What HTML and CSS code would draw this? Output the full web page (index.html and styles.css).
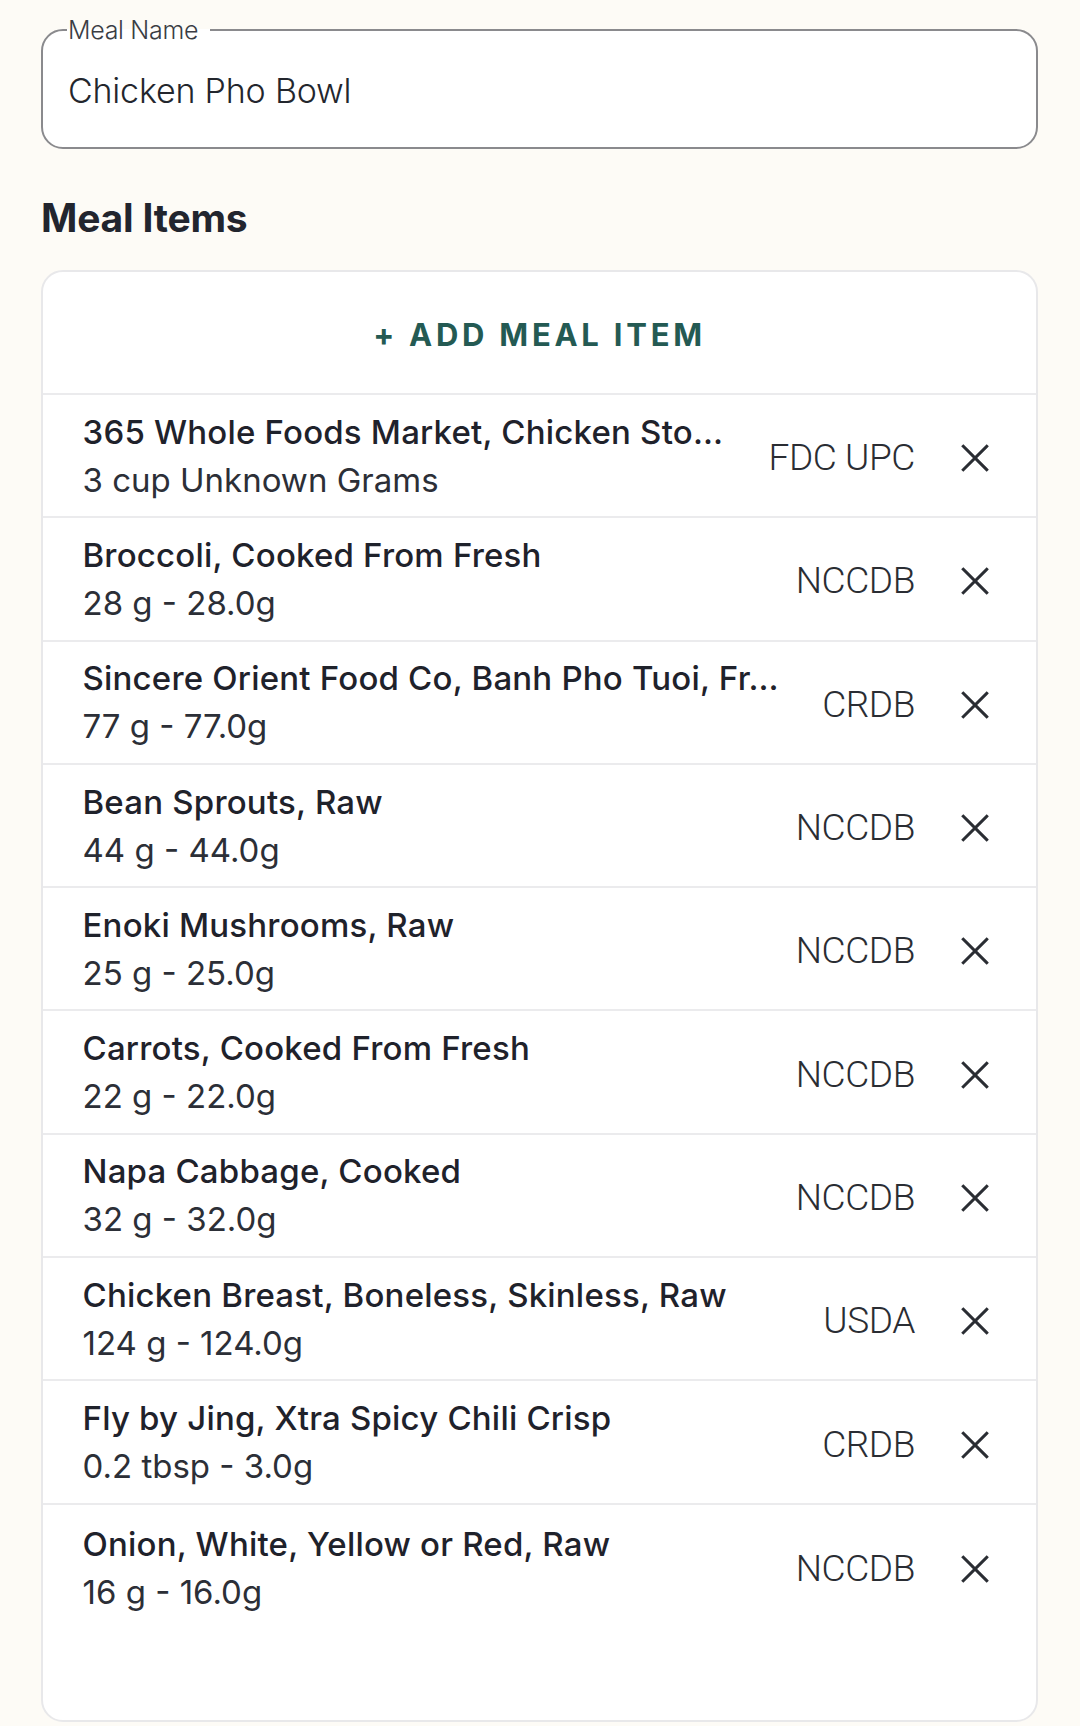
FILE: index.html
```html
<!DOCTYPE html>
<html>
<head>
<meta charset="utf-8">
<link rel="stylesheet" href="styles.css">
</head>
<body>
<div class="page">
  <fieldset class="field">
    <legend class="field-label">Meal Name</legend>
    <div class="field-value">Chicken Pho Bowl</div>
  </fieldset>

  <h2 class="section-title">Meal Items</h2>

  <div class="card">
    <div class="add-btn">+ ADD MEAL ITEM</div>
    <div class="row">
      <div class="info"><div class="name">365 Whole Foods Market, Chicken Sto…</div><div class="amount">3 cup Unknown Grams</div></div>
      <div class="source">FDC UPC</div>
      <svg class="close" viewBox="0 0 24 24"><path d="M2 2L22 22M22 2L2 22"/></svg>
    </div>
    <div class="row">
      <div class="info"><div class="name">Broccoli, Cooked From Fresh</div><div class="amount">28 g - 28.0g</div></div>
      <div class="source">NCCDB</div>
      <svg class="close" viewBox="0 0 24 24"><path d="M2 2L22 22M22 2L2 22"/></svg>
    </div>
    <div class="row">
      <div class="info"><div class="name">Sincere Orient Food Co, Banh Pho Tuoi, Fr…</div><div class="amount">77 g - 77.0g</div></div>
      <div class="source">CRDB</div>
      <svg class="close" viewBox="0 0 24 24"><path d="M2 2L22 22M22 2L2 22"/></svg>
    </div>
    <div class="row">
      <div class="info"><div class="name">Bean Sprouts, Raw</div><div class="amount">44 g - 44.0g</div></div>
      <div class="source">NCCDB</div>
      <svg class="close" viewBox="0 0 24 24"><path d="M2 2L22 22M22 2L2 22"/></svg>
    </div>
    <div class="row">
      <div class="info"><div class="name">Enoki Mushrooms, Raw</div><div class="amount">25 g - 25.0g</div></div>
      <div class="source">NCCDB</div>
      <svg class="close" viewBox="0 0 24 24"><path d="M2 2L22 22M22 2L2 22"/></svg>
    </div>
    <div class="row">
      <div class="info"><div class="name">Carrots, Cooked From Fresh</div><div class="amount">22 g - 22.0g</div></div>
      <div class="source">NCCDB</div>
      <svg class="close" viewBox="0 0 24 24"><path d="M2 2L22 22M22 2L2 22"/></svg>
    </div>
    <div class="row">
      <div class="info"><div class="name">Napa Cabbage, Cooked</div><div class="amount">32 g - 32.0g</div></div>
      <div class="source">NCCDB</div>
      <svg class="close" viewBox="0 0 24 24"><path d="M2 2L22 22M22 2L2 22"/></svg>
    </div>
    <div class="row">
      <div class="info"><div class="name">Chicken Breast, Boneless, Skinless, Raw</div><div class="amount">124 g - 124.0g</div></div>
      <div class="source">USDA</div>
      <svg class="close" viewBox="0 0 24 24"><path d="M2 2L22 22M22 2L2 22"/></svg>
    </div>
    <div class="row">
      <div class="info"><div class="name">Fly by Jing, Xtra Spicy Chili Crisp</div><div class="amount">0.2 tbsp - 3.0g</div></div>
      <div class="source">CRDB</div>
      <svg class="close" viewBox="0 0 24 24"><path d="M2 2L22 22M22 2L2 22"/></svg>
    </div>
    <div class="row row-last">
      <div class="info"><div class="name">Onion, White, Yellow or Red, Raw</div><div class="amount">16 g - 16.0g</div></div>
      <div class="source">NCCDB</div>
      <svg class="close" viewBox="0 0 24 24"><path d="M2 2L22 22M22 2L2 22"/></svg>
    </div>
  </div>
</div>
</body>
</html>
```
FILE: styles.css
```css
html, body {
  margin: 0;
  padding: 0;
  background: #fdfbf6;
}
body {
  font-family: Inter, "Noto Sans", sans-serif;
  color: #22252e;
}
.page {
  padding: 18px 42px 0 41px;
  box-sizing: border-box;
  width: 1080px;
}
.field {
  margin: 0;
  border: 2px solid #8a8a8d;
  border-radius: 22px;
  background: #ffffff;
  height: 131px;
  box-sizing: border-box;
  padding: 0 25px;
}
.field-label {
  font-size: 25px;
  font-weight: 300;
  color: #3a3d44;
  padding: 0 12px 0 1px;
  margin-left: -1px;
  line-height: 24px;
  letter-spacing: -0.3px;
}
.field-value {
  font-size: 34px;
  font-weight: 300;
  color: #23262d;
  letter-spacing: -0.2px;
  margin-top: 29px;
  line-height: 40px;
}
.section-title {
  margin: 49px 0 0 0;
  font-size: 39px;
  font-weight: 700;
  line-height: 40px;
  letter-spacing: -0.2px;
  color: #22252e;
}
.card {
  margin-top: 32px;
  background: #ffffff;
  border: 2px solid #e8e8ea;
  border-radius: 22px;
  height: 1452px;
  box-sizing: border-box;
  overflow: hidden;
}
.add-btn {
  height: 121px;
  display: flex;
  align-items: center;
  justify-content: center;
  font-size: 31px;
  font-weight: 700;
  letter-spacing: 3.75px;
  color: #245a53;
  padding-top: 3px;
  box-sizing: border-box;
}
.row {
  height: 123.3px;
  box-sizing: border-box;
  border-top: 2px solid #ebebed;
  display: flex;
  align-items: center;
  padding: 0 0 0 39.5px;
}
.row-last {
  height: 219px;
  align-items: flex-start;
  padding-top: 17px;
}
.info {
  flex: 1;
  min-width: 0;
  display: flex;
  flex-direction: column;
  gap: 4px;
}
.name {
  font-size: 33px;
  font-weight: 450;
  line-height: 44px;
  letter-spacing: 0.2px;
  color: #1f222b;
  white-space: nowrap;
}
.amount {
  font-size: 33px;
  font-weight: 400;
  line-height: 44px;
  letter-spacing: 0;
  color: #2c2f37;
}
.source {
  font-family: Roboto, "Liberation Sans", sans-serif;
  font-size: 37px;
  font-weight: 300;
  letter-spacing: -0.4px;
  color: #2a2d33;
  margin-left: 12px;
  margin-top: 4px;
}
.row-last .source {
  margin-top: 25px;
}
.close {
  width: 28px;
  height: 28px;
  margin: 5px 47px 0 46px;
  flex: none;
  fill: none;
  stroke: #2a2d33;
  stroke-width: 2.6;
  stroke-linecap: square;
}
.row-last .close {
  margin-top: 33px;
}
```
